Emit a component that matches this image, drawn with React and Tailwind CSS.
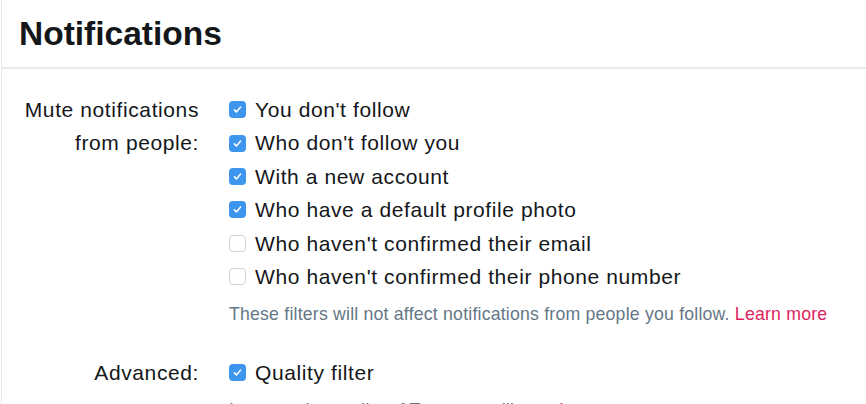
import React from "react";

const Check = ({ checked }) =>
  checked ? (
    <span className="flex h-[17px] w-[17px] shrink-0 items-center justify-center rounded-[4px] bg-[#3d95ee]">
      <svg viewBox="0 0 16 16" className="h-[11px] w-[11px]" fill="none" stroke="white" strokeWidth="2.2" strokeLinecap="round" strokeLinejoin="round">
        <path d="M3.5 8.5l3 3 6-7" />
      </svg>
    </span>
  ) : (
    <span className="h-[17px] w-[17px] shrink-0 rounded-[4px] border-[1.5px] border-[#ccd3d9] bg-white" />
  );

const Option = ({ checked, children }) => (
  <div className="flex h-[33.4px] items-center">
    <Check checked={checked} />
    <span className="ml-[9px]">{children}</span>
  </div>
);

export default function App() {
  return (
    <div
      className="h-[404px] w-[866px] overflow-hidden bg-white text-[#14171a]"
      style={{ fontFamily: '"Liberation Sans", Arial, sans-serif' }}
    >
      <div className="ml-[1px] h-full border-l border-[#e6ecf0]">
        <div className="flex h-[69px] items-center border-b-2 border-[#e6ecf0] pl-[17px]">
          <h1 className="text-[33.5px] font-bold leading-none">Notifications</h1>
        </div>
        <div className="pt-[24px] text-[21px] tracking-[0.6px]">
          <div className="flex">
            <div className="w-[197px] shrink-0 text-right leading-[33.4px]">
              Mute notifications
              <br />
              from people:
            </div>
            <div className="ml-[30px] flex flex-col">
              <Option checked>You don't follow</Option>
              <Option checked>Who don't follow you</Option>
              <Option checked>With a new account</Option>
              <Option checked>Who have a default profile photo</Option>
              <Option>Who haven't confirmed their email</Option>
              <Option>Who haven't confirmed their phone number</Option>
              <p className="mt-[8px] text-[17.7px] tracking-[0.2px] text-[#657786]">
                These filters will not affect notifications from people you follow.{" "}
                <span className="text-[#e0245e]">Learn more</span>
              </p>
            </div>
          </div>
          <div className="mt-[28px] flex">
            <div className="w-[197px] shrink-0 text-right leading-[33.4px]">Advanced:</div>
            <div className="ml-[30px] flex flex-col">
              <Option checked>Quality filter</Option>
              <p className="mt-[8px] text-[17.7px] tracking-[0.3px] text-[#657786]">
                Improve the quality of Tweets you'll see.{" "}
                <span className="text-[#e0245e]">Learn more</span>
              </p>
            </div>
          </div>
        </div>
      </div>
    </div>
  );
}
